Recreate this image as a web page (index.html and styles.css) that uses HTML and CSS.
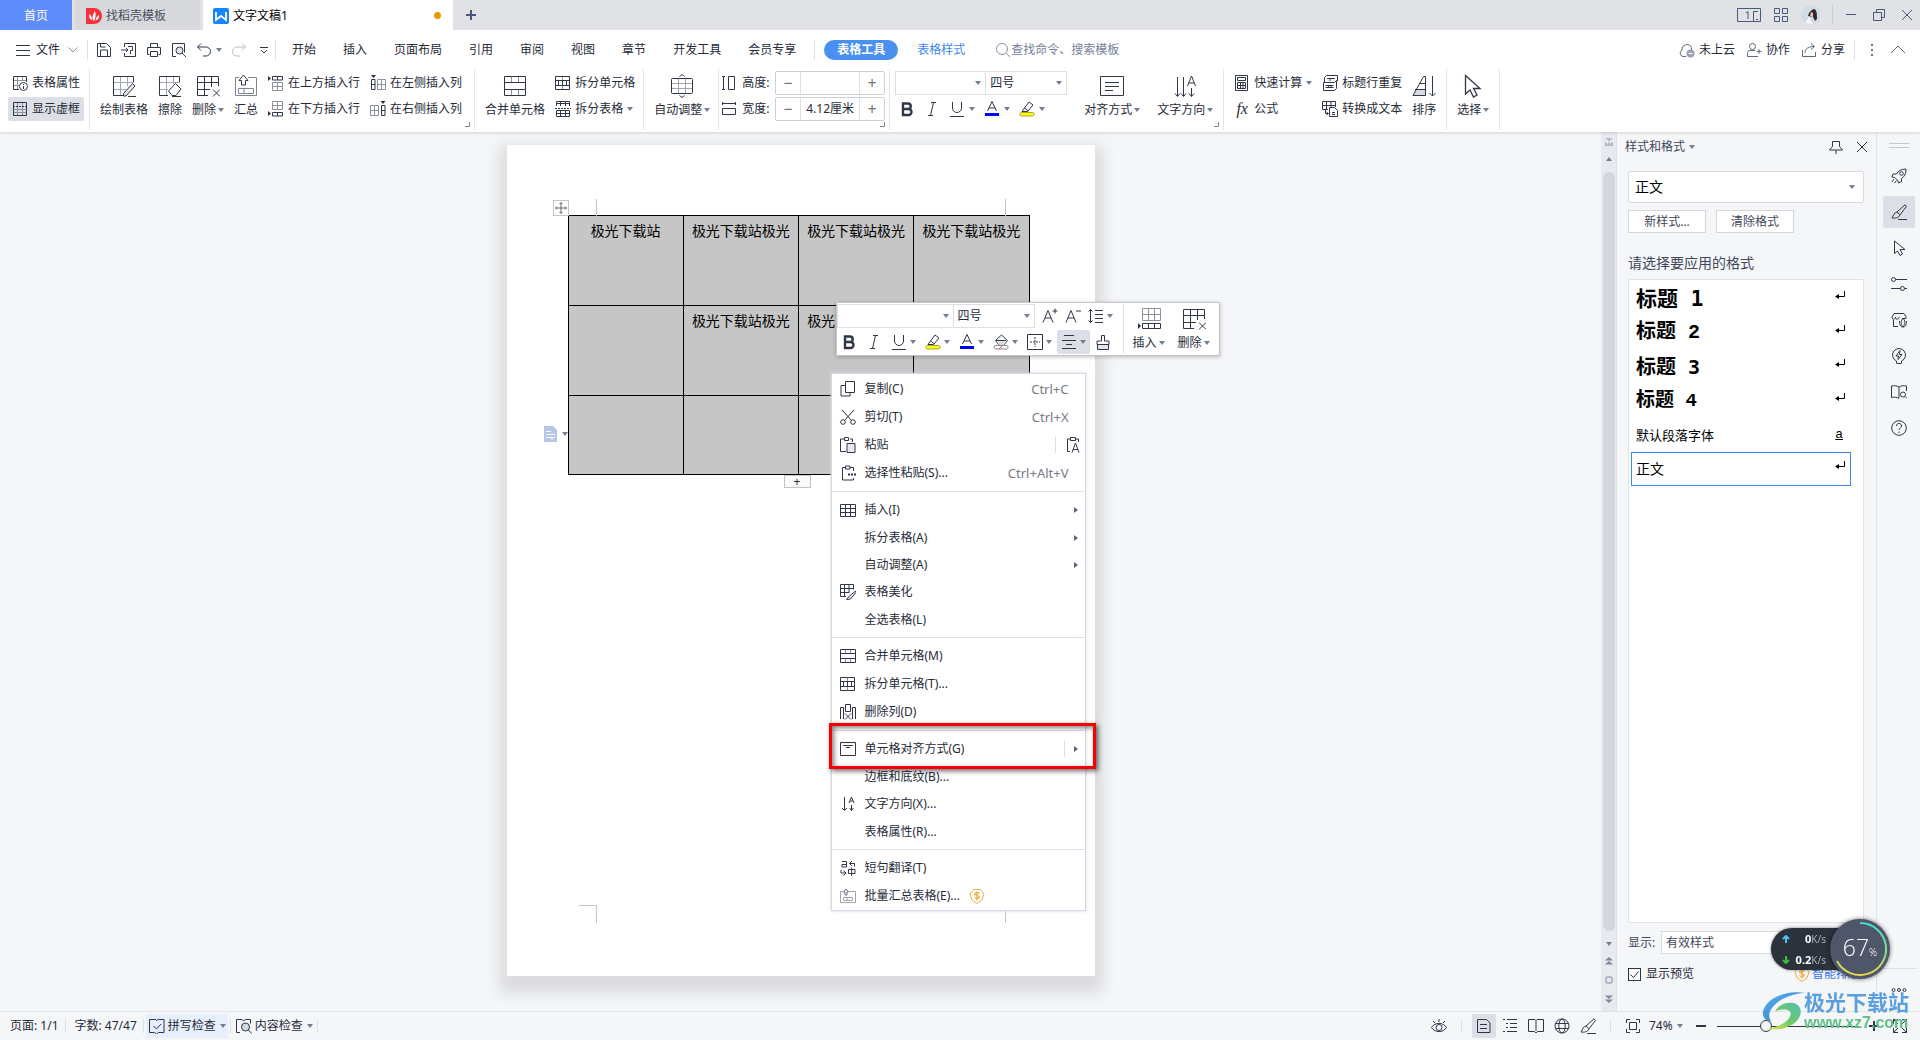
FILE: index.html
```html
<!DOCTYPE html>
<html lang="zh-CN">
<head>
<meta charset="utf-8">
<title>文字文稿1</title>
<link rel="stylesheet" href="styles.css">
</head>
<body>
<svg class="sprite" aria-hidden="true">
  <symbol id="caret" viewBox="0 0 6 4"><path d="M0 0h6L3 4z" fill="#737d93"/></symbol>
  <symbol id="arrow" viewBox="0 0 4 6"><path d="M0 0v6l4-3z" fill="#5a6377"/></symbol>
  <symbol id="corner" viewBox="0 0 5 5"><path d="M4.500 0v4.500H0" stroke="#7d8699"/></symbol>
  <symbol id="save" viewBox="0 0 16 16"><path d="M1.500 1.500h9l4 4v9h-13zM4.500 14v-6h7v6M4.500 2v3h5"/></symbol>
  <symbol id="export" viewBox="0 0 16 16"><path d="M3.500 5V1.500h11v13h-11V11M0 8h7M5 6l2 2-2 2M7 4.500h4.500v4H9.500V12"/></symbol>
  <symbol id="print" viewBox="0 0 16 16"><path d="M4.500 5V1.500h7V5M3.500 12.500h-2v-7h13v7h-2M4.500 9.500h7v5h-7z"/></symbol>
  <symbol id="preview" viewBox="0 0 16 16"><path d="M5 14.500H1.500v-13h12v9"/><circle cx="8.500" cy="8.500" r="3.500" fill="#e2e5ea"/><path d="M11 11l4 4"/></symbol>
  <symbol id="undo" viewBox="0 0 16 16"><path d="M5 1.500L1.500 5 5 8.500M1.500 5H10a4.500 4.500 0 010 9H7"/></symbol>
  <symbol id="redo" viewBox="0 0 16 16"><path d="M11 1.500L14.500 5 11 8.500M14.500 5H6a4.500 4.500 0 000 9h3" stroke="#b8bcc5"/></symbol>
  <symbol id="more" viewBox="0 0 8 8"><path d="M0 1.500h8M1 4l3 3 3-3"/></symbol>
  <symbol id="burger" viewBox="0 0 16 16"><path d="M1 3.500h14M1 8.500h14M1 13.500h14"/></symbol>
  <symbol id="chev" viewBox="0 0 10 6"><path d="M.5.5L5 5 9.500.5" stroke="#8d93a0"/></symbol>
  <symbol id="chevup" viewBox="0 0 16 16"><path d="M1 11l7-7 7 7" stroke="#5f6879"/></symbol>
  <symbol id="search" viewBox="0 0 16 16"><g stroke="#8a93a7"><circle cx="7" cy="7" r="5.500"/><path d="M11 11l4 4"/></g></symbol>
  <symbol id="cloud" viewBox="0 0 16 16"><path d="M7 14.500H4A3.500 3.500 0 013 8a5 5 0 019.500-2.500V8"/><circle cx="11.500" cy="11.500" r="4" fill="#98a3ba" stroke="none"/><path d="M9.500 11.500h4" stroke="#fff"/></symbol>
  <symbol id="person" viewBox="0 0 16 16"><circle cx="6.500" cy="4.500" r="3"/><path d="M12 14.500H1.500v-3a2.500 2.500 0 012.500-3h5M13 7v5M10.500 9.500h5"/></symbol>
  <symbol id="share" viewBox="0 0 16 16"><path d="M1.500 8v6.500h13V10M4 11c0-4 3-6.500 9-6.500M10 1.500l3.500 3-3.500 3"/></symbol>
  <symbol id="dots" viewBox="0 0 4 16"><path d="M1 2h2v2H1zM1 7h2v2H1zM1 12h2v2H1z" fill="#6d7584" stroke="none"/></symbol>
  <symbol id="tabprop" viewBox="0 0 16 16"><path d="M1.500 5.500h13M5.500 1.500v13M1.500 10.500h6M10.500 1.500V6" stroke="#8d929c"/><path d="M7 14.500H1.500v-13h13V7"/><circle cx="11.500" cy="11.500" r="4" fill="#fff"/><path d="M11.500 9v1M11.500 11v3"/></symbol>
  <symbol id="gridlines" viewBox="0 0 16 16"><path d="M5.500 1.500v13M10.500 1.500v13M1.500 8.500h13M1.500 11.500h13" stroke="#8d929c"/><path d="M1.500 1.500h13v13h-13z"/><path d="M1 5.500h14" stroke-dasharray="2 1"/></symbol>
  <symbol id="drawtab" viewBox="0 0 24 24"><path d="M2 8.500h20M2 15.500h12M8.500 2v20M15.500 2v10" stroke="#a3a7af"/><path d="M12 21.500H1.500v-19h20V8"/><path d="M20.500 9.500l2.500 2.500-9 10H11.500v-2.500z" fill="#e2e5ea"/><path d="M16 22.500h8"/></symbol>
  <symbol id="erase" viewBox="0 0 24 24"><path d="M2 8.500h20M2 15.500h8M8.500 2v20M15.500 2v8" stroke="#a3a7af"/><path d="M10 21.500H1.500v-19h20V8"/><path d="M17.500 9.500l5.500 5.500-5 6.500h-4L10.500 17z" fill="#fff"/><path d="M14 22.500h9"/></symbol>
  <symbol id="deltab" viewBox="0 0 24 24"><path d="M12 21.500H1.500v-19h21V12M2 8.500h21M2 15.500h12M8.500 2v20M15.500 2v11M17 15.500l7 7M24 15.500l-7 7"/></symbol>
  <symbol id="summary" viewBox="0 0 24 24"><path d="M5 3.500H1.500v18h21v-18H14M4.500 14.500h15v5h-15zM10 15v4" stroke="#7f8590"/><path d="M9.500 1L5 6.500h2.500V11h4V6.500H14z" fill="#fff"/></symbol>
  <symbol id="rowabove" viewBox="0 0 16 16"><path d="M4.500 7.500h10v8h-10zM9.500 8v7M5 11.500h9" stroke="#8d929c"/><path d="M4.500 1.500h10v3.500h-10zM9.500 1.500V5"/><path d="M0 1l3 2.500L0 6z" fill="#2b3142" stroke="none"/></symbol>
  <symbol id="rowbelow" viewBox="0 0 16 16"><path d="M4.500.5h10v8h-10zM9.500 1v7M5 4.500h9" stroke="#8d929c"/><path d="M4.500 11.500h10v3.500h-10zM9.500 11.500V15"/><path d="M0 10l3 2.500L0 15z" fill="#2b3142" stroke="none"/></symbol>
  <symbol id="colleft" viewBox="0 0 16 16"><path d="M7.500 4.500h8v10h-8zM11.500 5v9M8 9.500h7" stroke="#8d929c"/><path d="M1.500 4.500h3.500v10H1.500zM1.500 9.500H5"/><path d="M1 0h5L3.500 3z" fill="#2b3142" stroke="none"/></symbol>
  <symbol id="colright" viewBox="0 0 16 16"><path d="M.5 4.500h8v10h-8zM4.500 5v9M1 9.500h7" stroke="#8d929c"/><path d="M11.500 4.500h3.500v10h-3.500zM11.500 9.500H15"/><path d="M10.500 0h5L13 3z" fill="#2b3142" stroke="none"/></symbol>
  <symbol id="merge" viewBox="0 0 24 24"><path d="M8.500 2.500V8M15.500 2.500V8M8.500 16v5M15.500 16v5" stroke="#8d929c"/><path d="M1.500 2.500h21v19h-21zM1.500 8.500h21M1.500 15.500h21"/></symbol>
  <symbol id="merge16" viewBox="0 0 16 16"><path d="M5.500 2v4M10.500 2v4M5.500 10v4M10.500 10v4" stroke="#8d929c"/><path d="M.5 1.500h15v13H.5zM.5 5.500h15M.5 10.500h15"/></symbol>
  <symbol id="splitcell" viewBox="0 0 16 16"><path d="M7.500 2v3M7.500 11v3" stroke="#8d929c"/><path d="M.5 1.500h14v13H.5zM.5 5.500h14M.5 10.500h14M3.500 6v4M7.500 6v4M11.500 6v4"/></symbol>
  <symbol id="splittab" viewBox="0 0 16 16"><path d="M1.500 5V.5h13V5M2 2.500h12M5.500 1v4M10.500 1v4M1.500 15.500v-6h13v6zM2 12.500h12M5.500 10v5M10.500 10v5"/><path d="M0 7.500h16" stroke-dasharray="2 1"/></symbol>
  <symbol id="autofit" viewBox="0 0 24 24"><path d="M2 9.500h20M2 14.500h20M8.500 5v14M15.500 5v14" stroke="#a3a7af"/><rect x="1.500" y="4.500" width="21" height="15" rx="1"/><path d="M9.500 2.500L12 .5l2.500 2M9.500 21.500l2.500 2 2.500-2"/></symbol>
  <symbol id="height" viewBox="0 0 16 16"><path d="M2.500 1.500v13M1 1.500h3M1 14.500h3M7.500 1.500h6v13h-6z"/></symbol>
  <symbol id="width" viewBox="0 0 16 16"><path d="M1.500 2.500h13M1.500 1v3M14.500 1v3M1.500 7.500h13v6h-13z"/></symbol>
  <symbol id="bold" viewBox="0 0 16 16"><path d="M4 2.500h5a2.700 2.700 0 010 5.500H4zM4 8h5.500a3 3 0 010 6H4z" stroke-width="2.400"/></symbol>
  <symbol id="italic" viewBox="0 0 16 16"><path d="M7 1.500h5M4 14.500h5M9.500 1.500l-3 13"/></symbol>
  <symbol id="under" viewBox="0 0 16 16"><path d="M3.500 1v6a4.500 4.500 0 009 0V1M1 15.500h14"/></symbol>
  <symbol id="fcolor" viewBox="0 0 16 16"><path d="M3.500 10L8 .5 12.500 10M5 7h6"/><path d="M1 12h14v3H1z" fill="#00f" stroke="none"/></symbol>
  <symbol id="hilite" viewBox="0 0 16 16"><path d="M4 9l6-8 4 3-5.500 6.500H3zM5.500 7l4 3"/><rect x="1" y="11.500" width="14" height="3.500" rx="1.500" fill="#ff0" stroke="#a8a43c"/></symbol>
  <symbol id="bucket" viewBox="0 0 16 16"><path d="M2.500 6.500l6-5.500 6 5.500-3.500 4.500H6z"/><path d="M4 7.500h9.500L11 11H6z" fill="#d5d9e0" stroke="none"/><path d="M3 6.500h10"/><rect x="1" y="11.500" width="14" height="3.500" rx="1.500" stroke="#888"/><path d="M6 15l4-4" stroke="#e05050"/></symbol>
  <symbol id="border" viewBox="0 0 16 16"><path d="M.5.5h15v15H.5z"/><path d="M8 3v10M3 8h10" stroke-dasharray="2 1"/></symbol>
  <symbol id="center" viewBox="0 0 16 16"><path d="M3 1.500h10M1 6.500h14M5 10.500h6M1 14.500h14"/></symbol>
  <symbol id="brush" viewBox="0 0 16 16"><path d="M2.500 10.500v5h11v-5z" fill="#e2e5ea"/><path d="M6.500 7V1.500h3V7h4.500v3.500H2V7z"/></symbol>
  <symbol id="aplus" viewBox="0 0 16 16"><path d="M1 14.500L6 2.500l5 12M3 10h6M13 .5v5M10.500 3h5"/></symbol>
  <symbol id="aminus" viewBox="0 0 16 16"><path d="M1 14.500L6 2.500l5 12M3 10h6M11 3h5"/></symbol>
  <symbol id="spacing" viewBox="0 0 16 16"><path d="M2.500 1v14M.5 3.500l2-2 2 2M.5 12.500l2 2 2-2M7 2.500h8M7 6.500h8M7 10.500h8M7 14.500h8"/></symbol>
  <symbol id="align" viewBox="0 0 24 24"><path d="M.5 2.500h23v19H.5zM5 8.500h14M5 12.500h14M5 16.500h8"/></symbol>
  <symbol id="textdir" viewBox="0 0 24 24"><path d="M4.500 3v19M2 19.500l2.500 3 2.500-3M10.500 3v19M8 19.500l2.500 3 2.500-3M14.500 12L18.500 2l4 10M16 9h5M18.500 14v8M16 19.500l2.500 3 2.500-3"/></symbol>
  <symbol id="textdir16" viewBox="0 0 16 16"><path d="M4.500 1v13M2 12l2.500 2.500L7 12M9 7l2.500-6L14 7M10 5h3M11.500 9v5.500M9.500 12l2 2.500 2-2.500"/></symbol>
  <symbol id="calc" viewBox="0 0 16 16"><path d="M1.500.5h12v15h-12zM3.500 2.500h8v3h-8zM3.500 7.500h8v6h-8zM6.500 7.500v6M9 7.500v6M3.500 10.500h8"/></symbol>
  <symbol id="headrow" viewBox="0 0 16 16"><path d="M2.500 8V2.500l2-2h11V6M1.500 7.500h11l2-2v8l-2 2h-11z"/><path d="M5 3.500h8M3.500 10.500h8M3.500 12.500h8M6.500 10v3M9 10v3M8 3v3"/></symbol>
  <symbol id="totext" viewBox="0 0 16 16"><path d="M6 8.500H.5v-8h13V6M1 4.500h12M4.500 1v8M9 1v5M3.500 9v3.500H6M4.500 11L6.500 12.500l-2 1.500M7.500 6.500h5l3 3v6h-8zM10 11.500h3M10 13.500h3"/></symbol>
  <symbol id="sort" viewBox="0 0 24 24"><path d="M3 16h11v6H1z" fill="#d9dce1" stroke="none"/><path d="M1 21.500L11.500 2.500h2v19zM3 15.500h10.500M7 9.500h6M20.500 2v20M17.500 19l3 3 3-3"/></symbol>
  <symbol id="pointer" viewBox="0 0 24 24"><path d="M4.500 1.500v18.500l4.500-4 3.500 7 3.500-2-3.500-6.500H19z" stroke-width="1.300"/></symbol>
  <symbol id="pointer16" viewBox="0 0 16 16"><path d="M3.500 1v12.500l3-2.500 2.500 4.500 2.500-1.500L9 9.500h5z"/></symbol>
  <symbol id="copy" viewBox="0 0 16 16"><path d="M5 4.500H1V15h9v-3M5.500.5h9v11h-9z"/></symbol>
  <symbol id="cut" viewBox="0 0 16 16"><path d="M2 1l9.500 10.500M14 1L4.500 11.500"/><circle cx="3" cy="13" r="2.300"/><circle cx="13" cy="13" r="2.300"/></symbol>
  <symbol id="paste" viewBox="0 0 16 16"><path d="M4 2H.5v12.500H6M10 2h2.500v3M4.500.5h4v3h-4z"/><path d="M7 6.500h8v9H7z" fill="#e6e8ec"/></symbol>
  <symbol id="pastesp" viewBox="0 0 16 16"><path d="M5 2.500H2.500v12.500h11V13M10 2.500h3.500V6M5.500 1h4.500v3H5.500z"/><path d="M8 9.500h8" stroke-width="2" stroke-dasharray="2 1"/></symbol>
  <symbol id="pastea" viewBox="0 0 16 16"><path d="M5 2H2.500v12.500H5M11 2h2.500v3M5.500.5h5v3h-5zM7 15.500L10.500 6 14 15.500M8 12.500h5"/></symbol>
  <symbol id="grid" viewBox="0 0 16 16"><path d="M.5 2.500h15v12H.5zM.5 6.500h15M.5 10.500h15M5.500 2.500v12M10.500 2.500v12"/></symbol>
  <symbol id="beautify" viewBox="0 0 16 16"><path d="M6 12.500H.5v-12h13v5M1 4.500h12M1 8.500h8M4.500 1v11M9 1v8"/><path d="M15.500 7l-6 5-3 3.500 4-.5 5.500-6.500z" fill="#e2e5ea"/></symbol>
  <symbol id="delcol" viewBox="0 0 16 16"><path d="M.5 15V3.500h3V15M12.500 15V3.500h3V15M5.500.5h5v7h-5zM5 9.500l6 6M11 9.500l-6 6"/></symbol>
  <symbol id="cellalign" viewBox="0 0 16 16"><path d="M.5 1.500h15v13H.5zM3 4.500h10M6 6.500h4"/></symbol>
  <symbol id="translate" viewBox="0 0 16 16"><path d="M2 1.500h4.500V7H2V4.500h4.500M10 3.500h4.500v3M12 1l-2.500 2.500L12 6M1 10v3h4M3.500 10.500L6 13l-2.500 2.500M8.500 9.500h6.500v4H8.500zM11.700 7.500V16"/></symbol>
  <symbol id="summary16" viewBox="0 0 16 16"><path d="M3 3.500H.5v11h15v-11H9M3.500 9.500h9v3h-9zM7 10v2" stroke="#a0a4ac"/><path d="M6 1L3.500 4h1.500v3h2V4h1.500z" stroke="#6b7180"/></symbol>
  <symbol id="coin" viewBox="0 0 16 16"><path d="M4.500 1.500h7L15 6l-2 6-5 3.500L3 12 1 6z" stroke="#f0ad3e"/><path d="M10.500 5.500c-1-1.500-5-1-5 .5s5 1.500 5 3-4 2-5 .5M8 3.500v9" stroke="#f0ad3e" stroke-width="1.300"/></symbol>
  <symbol id="pin" viewBox="0 0 16 16"><path d="M4.500 2.500h7v5l3 3.500h-13l3-3.500zM8 11v4"/></symbol>
  <symbol id="close" viewBox="0 0 12 12"><path d="M1 1l10 10M11 1L1 11"/></symbol>
  <symbol id="ret" viewBox="0 0 10 8"><path d="M9.500 0v5.500H2" stroke="#000"/><path d="M0 5.500l4-2.500v5z" fill="#000" stroke="none"/></symbol>
  <symbol id="rocket" viewBox="0 0 16 16"><path d="M15 1c-5 0-8 2-9.500 5H2L.8 9l3 .5 3 3L7.500 15l3-1.500v-3C13.500 8.500 15 6 15 1zM3 11l-2 3M5.500 12.500l-2 2.500"/><circle cx="10.500" cy="5.500" r="1.800"/></symbol>
  <symbol id="pen" viewBox="0 0 16 16"><path d="M14 .8l1.500 1.500-6.500 8.500L6 8zM6 8c-3 .5-3 3-5 6 3 .5 7 0 8-3.200M7 15.500h9"/></symbol>
  <symbol id="sliders" viewBox="0 0 16 16"><circle cx="2.500" cy="3.500" r="2"/><circle cx="11.500" cy="12.500" r="2"/><path d="M4.500 3.500H16M0 12.500h9.500M13.500 12.500H16"/></symbol>
  <symbol id="shop" viewBox="0 0 16 16"><path d="M3 1.500h10l2 3v2H11M3 1.500l-2 3.500c0 3 3.500 3 3.500 0 0 3 3.500 3 3.500 0M2.500 8v6.500H7"/><path d="M12 6c-2 3-3 5 0 9 3-4 2-6 0-9zM8.500 9c0 4 1 6 3.500 6 2.500 0 3.500-2 3.500-6"/></symbol>
  <symbol id="bulb" viewBox="0 0 16 16"><path d="M5.500 15.500h5M5.500 13v2M10.500 13v2M5.500 13a6.500 6.500 0 115 0M9 2.500L5 8h2.500L7 11.500 11 6.500H8.500z"/></symbol>
  <symbol id="booksearch" viewBox="0 0 16 16"><path d="M8 3v11M8 3C6 1.500 3 1.500.5 2v11.500c2.500-.5 5.500-.5 7.500 1M8 3c2-1.500 5-1.500 7.500-1v5"/><circle cx="12" cy="10.500" r="2.500"/><path d="M14 12.500l2 2"/></symbol>
  <symbol id="help" viewBox="0 0 16 16"><circle cx="8" cy="8" r="7.300"/><path d="M5.500 6c0-3.500 5-3.500 5 0 0 2-2.500 2-2.500 4M8 11.500V13"/></symbol>
  <symbol id="spell" viewBox="0 0 16 16"><path d="M6 1.500H.5v13h5l2 1.500 2-1.500h5.500v-13H9.500M7.500 2.500L6 1M7.500 2.500L9.500 1M4.500 8l3 3L12 6"/></symbol>
  <symbol id="content" viewBox="0 0 16 16"><path d="M4 14.500H.5v-13H6l1.500 1.500 2-1.500h5v4"/><circle cx="9.500" cy="9" r="4" fill="#d5d9e0"/><path d="M12.500 12l3 3.500"/></symbol>
  <symbol id="eye" viewBox="0 0 16 16"><path d="M.5 9.500C4 4 12 4 15.500 9.500 12 15 4 15 .5 9.500zM2 3l2 2M8 1v3M14 3l-2 2"/><circle cx="8" cy="9.500" r="3"/></symbol>
  <symbol id="vpage" viewBox="0 0 16 16"><path d="M1.500 1.500h9l3.500 3.500v9.500H1.500zM4 6.500h7M4 10.500h7"/></symbol>
  <symbol id="voutline" viewBox="0 0 16 16"><path d="M1 1.500h2M5 1.500h10M4 5.500h2M8 5.500h7M4 9.500h2M8 9.500h7M1 13.500h2M5 13.500h10"/></symbol>
  <symbol id="vbook" viewBox="0 0 16 16"><path d="M.5 1.500H7l1 1 1-1h6.500v12H9.500L8 15l-1.500-1.500h-6zM8 2.500V13"/></symbol>
  <symbol id="globe" viewBox="0 0 16 16"><circle cx="8" cy="8" r="7"/><ellipse cx="8" cy="8" rx="3.200" ry="7"/><path d="M1.500 5.500h13M1.500 10.500h13"/></symbol>
  <symbol id="fit" viewBox="0 0 16 16"><path d="M1.500 5V1.500H5M11 1.500h3.500V5M14.500 11v3.500H11M5 14.500H1.500V11M4.500 4.500h7v7h-7z"/></symbol>
  <symbol id="full" viewBox="0 0 16 16"><path d="M1.500 6V1.500H6M10 1.500h4.500V6M14.500 10v4.500H10M6 14.500H1.500V10M1.500 1.500L6 6M14.500 1.500L10 6M14.500 14.500L10 10M1.500 14.500L6 10"/></symbol>
  <symbol id="minus" viewBox="0 0 12 12"><path d="M1 6h10" stroke-width="2"/></symbol>
  <symbol id="plus" viewBox="0 0 12 12"><path d="M1 6h10M6 1v10" stroke-width="2"/></symbol>
  <symbol id="move" viewBox="0 0 12 12"><path d="M6 .5v11M.5 6h11M4.500 2L6 .5 7.500 2M4.500 10L6 11.500 7.500 10M2 4.500L.5 6 2 7.500M10 4.500L11.500 6 10 7.500" stroke="#666"/></symbol>
</svg>

<header class="top">
  <div class="titlebar">
    <button class="tab home">首页</button>
    <button class="tab docer"><svg class="i16" viewBox="0 0 16 16"><path d="M0 0h8a8 8 0 010 16H0z" fill="#f5323c"/><path d="M8 13C5 11 7 6 9 3c1 3 1 7-1 10zM6 12C3 11 3 8 3.500 6 5 7 6 9 6 12zM9.500 12.500c3-1 4-3 3.500-5.500-2 1-3 3-3.500 5.500z" fill="#fff" stroke="none"/></svg>找稻壳模板</button>
    <button class="tab current"><svg class="i16" viewBox="0 0 16 16"><rect width="16" height="16" rx="2" fill="#1685fb" stroke="none"/><path d="M3 4v8l5-4 5 4V4" stroke="#fff" stroke-width="1.800"/></svg>文字文稿1<i class="unsaved"></i></button>
    <button class="plain newtab" aria-label="新建"><svg class="i12"><use href="#plus"/></svg></button>
    <div class="winctl">
      <button class="plain" aria-label="窗口"><svg class="wide" viewBox="0 0 24 16"><path d="M.5 1.500h23v13H.5zM21 4.500h-4.500v10M19 12.500h2M9 6l2-1.500V12"/></svg></button>
      <button class="plain" aria-label="应用"><svg class="i16" viewBox="0 0 16 16"><path d="M1.500 1.500h5v5h-5zM9.500 1.500h5v5h-5zM1.500 9.500h5v5h-5zM9.500 9.500h5v5h-5z"/></svg></button>
      <button class="plain" aria-label="账户"><svg class="i20" viewBox="0 0 20 20"><circle cx="10" cy="10" r="10" fill="#cfdce3" stroke="none"/><path d="M7 11c1-4 3-6 6-7 3 1 3 5 3 10l-2 2-2-4z" fill="#33282b" stroke="none"/><path d="M10 7l2 1v4l-3-1z" fill="#e8c4b8" stroke="none"/><path d="M4 18l4-6 4 7z" fill="#f5f5f7" stroke="none"/></svg></button>
      <i class="vsep"></i>
      <button class="plain" aria-label="最小化"><svg class="i12" viewBox="0 0 12 12"><path d="M1 5.500h10"/></svg></button>
      <button class="plain" aria-label="还原"><svg class="i12" viewBox="0 0 12 12"><path d="M3.500 3V.5h8v8H9M.5 3.500h8v8h-8z"/></svg></button>
      <button class="plain" aria-label="关闭"><svg class="i12"><use href="#close"/></svg></button>
    </div>
  </div>

  <div class="menubar">
    <button class="plain file"><svg class="i16"><use href="#burger"/></svg>文件<svg class="chev"><use href="#chev"/></svg></button>
    <i class="vsep"></i>
    <div class="quick">
      <button class="plain" aria-label="保存"><svg class="i16"><use href="#save"/></svg></button>
      <button class="plain" aria-label="输出"><svg class="i16"><use href="#export"/></svg></button>
      <button class="plain" aria-label="打印"><svg class="i16"><use href="#print"/></svg></button>
      <button class="plain" aria-label="预览"><svg class="i16"><use href="#preview"/></svg></button>
      <button class="plain" aria-label="撤销"><svg class="i16"><use href="#undo"/></svg><svg class="caret"><use href="#caret"/></svg></button>
      <button class="plain" aria-label="恢复"><svg class="i16"><use href="#redo"/></svg></button>
      <button class="plain custom" aria-label="自定义"><svg class="i8"><use href="#more"/></svg></button>
    </div>
    <i class="vsep"></i>
    <nav class="tabs">
      <a href="#">开始</a><a href="#">插入</a><a href="#">页面布局</a><a href="#">引用</a><a href="#">审阅</a><a href="#">视图</a><a href="#">章节</a><a href="#">开发工具</a><a href="#">会员专享</a>
    </nav>
    <i class="vsep"></i>
    <a class="pill" href="#">表格工具</a>
    <a class="styletab" href="#">表格样式</a>
    <label class="find"><svg class="i16"><use href="#search"/></svg><input placeholder="查找命令、搜索模板" aria-label="查找命令、搜索模板"></label>
    <div class="collab">
      <button class="plain"><svg class="i16"><use href="#cloud"/></svg>未上云</button>
      <button class="plain"><svg class="i16"><use href="#person"/></svg>协作</button>
      <button class="plain"><svg class="i16"><use href="#share"/></svg>分享</button>
    </div>
    <i class="vsep"></i>
    <div class="fold">
      <button class="plain" aria-label="更多"><svg class="dots"><use href="#dots"/></svg></button>
      <button class="plain" aria-label="收起"><svg class="i16"><use href="#chevup"/></svg></button>
    </div>
  </div>

  <div class="ribbon">
    <div class="group first">
      <div class="stack">
        <button class="small"><svg class="i16"><use href="#tabprop"/></svg>表格属性</button>
        <button class="small on"><svg class="i16"><use href="#gridlines"/></svg>显示虚框</button>
      </div>
    </div>
    <div class="group insert">
      <button class="big"><svg class="i24"><use href="#drawtab"/></svg><span>绘制表格</span></button>
      <button class="big"><svg class="i24"><use href="#erase"/></svg><span>擦除</span></button>
      <button class="big"><svg class="i24"><use href="#deltab"/></svg><span>删除<svg class="caret"><use href="#caret"/></svg></span></button>
      <button class="big"><svg class="i24"><use href="#summary"/></svg><span>汇总</span></button>
      <div class="stack">
        <button class="small flush"><svg class="i16"><use href="#rowabove"/></svg>在上方插入行</button>
        <button class="small flush"><svg class="i16"><use href="#rowbelow"/></svg>在下方插入行</button>
      </div>
      <div class="stack">
        <button class="small flush"><svg class="i16"><use href="#colleft"/></svg>在左侧插入列</button>
        <button class="small flush"><svg class="i16"><use href="#colright"/></svg>在右侧插入列</button>
      </div>
      <svg class="corner"><use href="#corner"/></svg>
    </div>
    <div class="group tight">
      <button class="big"><svg class="i24"><use href="#merge"/></svg><span>合并单元格</span></button>
      <div class="stack">
        <button class="small flush"><svg class="i16"><use href="#splitcell"/></svg>拆分单元格</button>
        <button class="small flush"><svg class="i16"><use href="#splittab"/></svg>拆分表格<svg class="caret"><use href="#caret"/></svg></button>
      </div>
    </div>
    <div class="group tight">
      <button class="big"><svg class="i24"><use href="#autofit"/></svg><span>自动调整<svg class="caret"><use href="#caret"/></svg></span></button>
    </div>
    <div class="group size">
      <div class="stack">
        <div class="dim"><svg class="i16"><use href="#height"/></svg><label for="rowh">高度:</label><div class="spin"><button aria-label="减小">−</button><input id="rowh"><button aria-label="增大">+</button></div></div>
        <div class="dim"><svg class="i16"><use href="#width"/></svg><label for="colw">宽度:</label><div class="spin"><button aria-label="减小">−</button><input id="colw" value="4.12厘米"><button aria-label="增大">+</button></div></div>
      </div>
      <svg class="corner"><use href="#corner"/></svg>
    </div>
    <div class="group font">
      <div class="stack">
        <div class="combo"><select class="fname" aria-label="字体"><option></option></select><select class="fsize" aria-label="字号"><option>四号</option></select></div>
        <div class="fmt">
          <button class="plain" aria-label="加粗"><svg class="i16"><use href="#bold"/></svg></button>
          <button class="plain" aria-label="倾斜"><svg class="i16"><use href="#italic"/></svg></button>
          <button class="plain" aria-label="下划线"><svg class="i16"><use href="#under"/></svg><svg class="caret"><use href="#caret"/></svg></button>
          <button class="plain" aria-label="字体颜色"><svg class="i16"><use href="#fcolor"/></svg><svg class="caret"><use href="#caret"/></svg></button>
          <button class="plain" aria-label="突出显示"><svg class="i16"><use href="#hilite"/></svg><svg class="caret"><use href="#caret"/></svg></button>
        </div>
      </div>
      <button class="big"><svg class="i24"><use href="#align"/></svg><span>对齐方式<svg class="caret"><use href="#caret"/></svg></span></button>
      <button class="big"><svg class="i24"><use href="#textdir"/></svg><span>文字方向<svg class="caret"><use href="#caret"/></svg></span></button>
      <svg class="corner"><use href="#corner"/></svg>
    </div>
    <div class="group">
      <div class="stack">
        <button class="small flush"><svg class="i16"><use href="#calc"/></svg>快速计算<svg class="caret"><use href="#caret"/></svg></button>
        <button class="small flush"><i class="fx">fx</i>公式</button>
      </div>
      <div class="stack">
        <button class="small flush"><svg class="i16"><use href="#headrow"/></svg>标题行重复</button>
        <button class="small flush"><svg class="i16"><use href="#totext"/></svg>转换成文本</button>
      </div>
      <button class="big"><svg class="i24"><use href="#sort"/></svg><span>排序</span></button>
    </div>
    <div class="group">
      <button class="big"><svg class="i24"><use href="#pointer"/></svg><span>选择<svg class="caret"><use href="#caret"/></svg></span></button>
    </div>
  </div>
</header>

<main class="work">
  <section class="canvas">
    <article class="page">
      <i class="mark tl"></i><i class="mark tr"></i><i class="mark bl"></i><i class="mark br"></i>
      <span class="handle"><svg class="i12"><use href="#move"/></svg></span>
      <table class="doc">
        <tr class="tall"><td>极光下载站</td><td>极光下载站极光</td><td>极光下载站极光</td><td>极光下载站极光</td></tr>
        <tr class="tall"><td></td><td>极光下载站极光</td><td>极光下载站极光</td><td></td></tr>
        <tr><td></td><td></td><td></td><td></td></tr>
      </table>
      <span class="addrow">+</span>
      <span class="para"><svg class="i16" viewBox="0 0 16 16"><path d="M1 0h9l4 4v12H1z" fill="#b4c7e7" stroke="none"/><path d="M3 5.500h5M3 8.500h9M3 11.500h9M9 11v3" stroke="#fff"/></svg><svg class="caret"><use href="#caret"/></svg></span>

      <div class="minibar">
        <div class="minileft">
          <div class="minirow">
            <div class="combo"><select class="fname" aria-label="字体"><option></option></select><select class="fsize" aria-label="字号"><option>四号</option></select></div>
            <button class="plain" aria-label="增大字号"><svg class="i16"><use href="#aplus"/></svg></button>
            <button class="plain" aria-label="减小字号"><svg class="i16"><use href="#aminus"/></svg></button>
            <button class="plain" aria-label="行距"><svg class="i16"><use href="#spacing"/></svg><svg class="caret"><use href="#caret"/></svg></button>
          </div>
          <div class="minirow fmts">
            <button class="plain" aria-label="加粗"><svg class="i16"><use href="#bold"/></svg></button>
            <button class="plain" aria-label="倾斜"><svg class="i16"><use href="#italic"/></svg></button>
            <button class="plain" aria-label="下划线"><svg class="i16"><use href="#under"/></svg><svg class="caret"><use href="#caret"/></svg></button>
            <button class="plain" aria-label="突出显示"><svg class="i16"><use href="#hilite"/></svg><svg class="caret"><use href="#caret"/></svg></button>
            <button class="plain" aria-label="字体颜色"><svg class="i16"><use href="#fcolor"/></svg><svg class="caret"><use href="#caret"/></svg></button>
            <button class="plain" aria-label="底纹"><svg class="i16"><use href="#bucket"/></svg><svg class="caret"><use href="#caret"/></svg></button>
            <button class="plain" aria-label="边框"><svg class="i16"><use href="#border"/></svg><svg class="caret"><use href="#caret"/></svg></button>
            <button class="plain on" aria-label="居中"><svg class="i16"><use href="#center"/></svg><svg class="caret"><use href="#caret"/></svg></button>
            <button class="plain" aria-label="格式刷"><svg class="i16"><use href="#brush"/></svg></button>
          </div>
        </div>
        <div class="miniright">
          <button class="big"><svg class="i24" viewBox="0 0 24 24"><path d="M5.500 1.500h18v12h-18zM11.500 2v11M17.500 2v11M6 7.500h17" stroke="#8d929c"/><path d="M5.500 16.500h18v5h-18zM11.500 17v4M17.500 17v4"/><path d="M1 16l3 3-3 3z" fill="#2b3142" stroke="none"/></svg><span>插入<svg class="caret"><use href="#caret"/></svg></span></button>
          <button class="big"><svg class="i24"><use href="#deltab"/></svg><span>删除<svg class="caret"><use href="#caret"/></svg></span></button>
        </div>
      </div>

      <div class="context">
        <button class="item"><svg class="i16"><use href="#copy"/></svg><span>复制(C)</span><kbd>Ctrl+C</kbd></button>
        <button class="item"><svg class="i16"><use href="#cut"/></svg><span>剪切(T)</span><kbd>Ctrl+X</kbd></button>
        <button class="item"><svg class="i16"><use href="#paste"/></svg><span>粘贴</span><i class="vbar"></i><svg class="i16 side"><use href="#pastea"/></svg></button>
        <button class="item"><svg class="i16"><use href="#pastesp"/></svg><span>选择性粘贴(S)...</span><kbd>Ctrl+Alt+V</kbd></button>
        <hr>
        <button class="item"><svg class="i16"><use href="#grid"/></svg><span>插入(I)</span><svg class="arrow"><use href="#arrow"/></svg></button>
        <button class="item bare"><span>拆分表格(A)</span><svg class="arrow"><use href="#arrow"/></svg></button>
        <button class="item bare"><span>自动调整(A)</span><svg class="arrow"><use href="#arrow"/></svg></button>
        <button class="item"><svg class="i16"><use href="#beautify"/></svg><span>表格美化</span></button>
        <button class="item bare"><span>全选表格(L)</span></button>
        <hr>
        <button class="item"><svg class="i16"><use href="#merge16"/></svg><span>合并单元格(M)</span></button>
        <button class="item"><svg class="i16"><use href="#splitcell"/></svg><span>拆分单元格(T)...</span></button>
        <button class="item"><svg class="i16"><use href="#delcol"/></svg><span>删除列(D)</span></button>
        <hr>
        <button class="item marked"><svg class="i16"><use href="#cellalign"/></svg><span>单元格对齐方式(G)</span><i class="vbar"></i><svg class="arrow"><use href="#arrow"/></svg></button>
        <button class="item bare"><span>边框和底纹(B)...</span></button>
        <button class="item"><svg class="i16"><use href="#textdir16"/></svg><span>文字方向(X)...</span></button>
        <button class="item bare"><span>表格属性(R)...</span></button>
        <hr>
        <button class="item"><svg class="i16"><use href="#translate"/></svg><span>短句翻译(T)</span></button>
        <button class="item"><svg class="i16"><use href="#summary16"/></svg><span class="fit">批量汇总表格(E)...</span><svg class="i16"><use href="#coin"/></svg></button>
      </div>
    </article>
  </section>

  <div class="vscroll">
    <svg class="i8" viewBox="0 0 8 8"><path d="M1 0h6v1.500H5V3H3V1.500H1zM0 4.500h2v2h1v-2h2v2h1v-2h2V8H0z" fill="#aeb5c6" stroke="none"/></svg>
    <svg class="caret up"><use href="#caret"/></svg>
    <div class="thumb"></div>
    <svg class="caret"><use href="#caret"/></svg>
    <svg class="i8" viewBox="0 0 8 8"><path d="M4 0l4 3.500H0zM4 4l4 3.500H0z" fill="#7f89a0" stroke="none"/></svg>
    <svg class="i8" viewBox="0 0 8 8"><rect x="1" y="1" width="6" height="6" rx="1" stroke="#7f89a0"/></svg>
    <svg class="i8" viewBox="0 0 8 8"><path d="M4 4L0 .5h8zM4 8L0 4.500h8z" fill="#7f89a0" stroke="none"/></svg>
  </div>

  <aside class="pane">
    <div class="panehead"><button class="plain">样式和格式<svg class="caret"><use href="#caret"/></svg></button><span class="grow"></span><button class="plain" aria-label="固定"><svg class="i16"><use href="#pin"/></svg></button><button class="plain" aria-label="关闭"><svg class="i12"><use href="#close"/></svg></button></div>
    <select class="cur" aria-label="当前样式"><option>正文</option></select>
    <div class="pbtns"><button>新样式...</button><button>清除格式</button></div>
    <h2>请选择要应用的格式</h2>
    <ul class="styles">
      <li class="h1">标题 1<svg><use href="#ret"/></svg></li>
      <li class="hb">标题 2<svg><use href="#ret"/></svg></li>
      <li class="h3">标题 3<svg><use href="#ret"/></svg></li>
      <li class="hb h4">标题 4<svg><use href="#ret"/></svg></li>
      <li class="def">默认段落字体<u>a</u></li>
      <li class="sel">正文<svg><use href="#ret"/></svg></li>
    </ul>
    <div class="show"><label for="show">显示:</label><select id="show"><option>有效样式</option></select></div>
    <div class="prev"><input type="checkbox" id="pv" checked><label for="pv">显示预览</label><span class="grow"></span><a href="#"><svg class="i16"><use href="#coin"/></svg>智能排版</a></div>
  </aside>

  <nav class="rail">
    <i class="grip"></i>
    <button class="plain" aria-label="快捷"><svg class="i16"><use href="#rocket"/></svg></button>
    <button class="plain on" aria-label="样式"><svg class="i16"><use href="#pen"/></svg></button>
    <button class="plain" aria-label="选择"><svg class="i16"><use href="#pointer16"/></svg></button>
    <button class="plain" aria-label="属性"><svg class="i16"><use href="#sliders"/></svg></button>
    <button class="plain" aria-label="稻壳"><svg class="i16"><use href="#shop"/></svg></button>
    <button class="plain" aria-label="推荐"><svg class="i16"><use href="#bulb"/></svg></button>
    <button class="plain" aria-label="查找"><svg class="i16"><use href="#booksearch"/></svg></button>
    <button class="plain" aria-label="帮助"><svg class="i16"><use href="#help"/></svg></button>
    <span class="grow"></span>
    <div class="railend"><svg class="i16" viewBox="0 0 16 16"><circle cx="2.500" cy="8" r="1.500"/><circle cx="8" cy="8" r="1.500"/><circle cx="13.500" cy="8" r="1.500"/></svg></div>
  </nav>
</main>

<footer class="status">
  <span class="cell">页面: 1/1</span><i class="vsep"></i>
  <span class="cell">字数: 47/47</span><i class="vsep"></i>
  <button class="check hot"><svg class="i16"><use href="#spell"/></svg>拼写检查<svg class="caret"><use href="#caret"/></svg></button><i class="vsep"></i>
  <button class="check"><svg class="i16"><use href="#content"/></svg>内容检查<svg class="caret"><use href="#caret"/></svg></button><i class="vsep"></i>
  <span class="grow"></span>
  <button class="sq" aria-label="护眼"><svg class="i16"><use href="#eye"/></svg></button><i class="vsep far"></i>
  <button class="sq on" aria-label="页面视图"><svg class="i16"><use href="#vpage"/></svg></button>
  <button class="sq" aria-label="大纲"><svg class="i16"><use href="#voutline"/></svg></button>
  <button class="sq" aria-label="阅读"><svg class="i16"><use href="#vbook"/></svg></button>
  <button class="sq" aria-label="Web"><svg class="i16"><use href="#globe"/></svg></button>
  <button class="sq" aria-label="写作"><svg class="i16"><use href="#pen"/></svg></button><i class="vsep far"></i>
  <button class="sq" aria-label="适合"><svg class="i16"><use href="#fit"/></svg></button>
  <select class="zoom" aria-label="缩放"><option>74%</option></select>
  <button class="sq" aria-label="缩小"><svg class="i12"><use href="#minus"/></svg></button>
  <input type="range" min="0" max="100" value="33" aria-label="显示比例">
  <button class="sq" aria-label="放大"><svg class="i12"><use href="#plus"/></svg></button>
  <button class="sq" aria-label="全屏"><svg class="i16"><use href="#full"/></svg></button>
</footer>

<div class="net">
  <div class="rates">
    <div><svg class="i8" viewBox="0 0 8 8"><path d="M4 8V1M1 4l3-3 3 3" stroke="#4fc3f7" stroke-width="2"/></svg><b>0<small>K/s</small></b></div>
    <div><svg class="i8" viewBox="0 0 8 8"><path d="M4 0v7M1 4l3 3 3-3" stroke="#3fbf3f" stroke-width="2"/></svg><b>0.2<small>K/s</small></b></div>
  </div>
  <div class="ball"><svg viewBox="0 0 60 60"><defs><linearGradient id="ring" x1="0" y1="0" x2="0" y2="1"><stop offset="0" stop-color="#3fe0d8"/><stop offset=".6" stop-color="#8fdc7a"/><stop offset="1" stop-color="#e8d84a"/></linearGradient></defs><path d="M30 4a26 26 0 11-23 38" stroke="url(#ring)" stroke-width="2"/></svg><span>67<small>%</small></span></div>
</div>
<div class="brand">
  <svg viewBox="0 0 46 42"><defs><linearGradient id="sw" x1="0" y1="0" x2="1" y2="1"><stop offset="0" stop-color="#4fb4ea"/><stop offset=".5" stop-color="#4a92dc"/><stop offset="1" stop-color="#5cc46a"/></linearGradient><linearGradient id="sg" x1="0" y1="1" x2="1" y2="0"><stop offset="0" stop-color="#e6e34a"/><stop offset=".5" stop-color="#6cc96a"/><stop offset="1" stop-color="#56bdb4"/></linearGradient></defs><path d="M45 2C24-1 4 8 1 22c-1 6 4 10 9 10C5 26 8 19 15 13 22 7 33 3 45 2z" fill="url(#sw)" stroke="none"/><path d="M14 21c3-6 12-10 20-8 10 4 8 16-2 22-8 5-18 6-26 5 10-2 22-7 24-15 1-6-8-7-16-4z" fill="url(#sg)" stroke="none"/></svg>
  <div><strong>极光下载站</strong><em>www.xz7.com</em></div>
</div>
</body>
</html>
```

FILE: styles.css
```css
*, *::before, *::after { box-sizing: border-box; }
body {
  margin: 0;
  height: 100vh;
  display: flex;
  flex-direction: column;
  overflow: hidden;
  background: #f5f6f8;
  color: #262b38;
  font: 12px/18px "Noto Sans", "Noto Sans CJK SC", sans-serif;
}
button, select, input { font: inherit; color: inherit; margin: 0; }
button { border: 0; padding: 0; background: none; white-space: nowrap; }
a { color: inherit; text-decoration: none; }
svg { fill: none; stroke: #2f3647; flex: none; display: block; }
#caret, #arrow { stroke: none; }
.sprite { position: absolute; width: 0; height: 0; }
.i8 { width: 8px; height: 8px; }
.i12 { width: 12px; height: 12px; }
.i16 { width: 16px; height: 16px; }
.i20 { width: 20px; height: 20px; }
.i24 { width: 24px; height: 24px; }
.wide { width: 24px; height: 16px; }
.caret { width: 6px; height: 4px; }
.arrow { width: 4px; height: 6px; }
.chev { width: 10px; height: 6px; }
.dots { width: 4px; height: 16px; }
.grow { flex: 1; }
.plain { display: flex; align-items: center; gap: 4px; }
.vsep { width: 1px; height: 20px; background: #dcdfe4; flex: none; }

select {
  appearance: none;
  border: 0;
  border-radius: 0;
  padding: 0 16px 0 4px;
  background: #fff url("data:image/svg+xml,%3Csvg xmlns='http://www.w3.org/2000/svg' width='6' height='4'%3E%3Cpath d='M0 0h6L3 4z' fill='%23737d93'/%3E%3C/svg%3E") no-repeat right 4px center;
}

/* title bar */
.top { flex: none; position: relative; background: #fff; box-shadow: 0 1px 3px rgba(0, 0, 0, .15); }
.titlebar { display: flex; align-items: stretch; height: 30px; background: #e1e2e6; gap: 3px; }
.tab { display: flex; align-items: center; gap: 4px; padding-top: 1px; text-align: left; }
.home { width: 72px; justify-content: center; background: #5e8cfb; color: #fff; }
.docer { width: 125px; padding-left: 11px; background: #d8d9dc; color: #4a505e; }
.docer svg { stroke: none; }
.current { width: 250px; padding: 1px 12px 0 10px; background: #fff; color: #000; }
.unsaved { width: 7px; height: 7px; border-radius: 50%; background: #e59a00; margin-left: auto; }
.newtab { padding-left: 9px; }
.titlebar .plain svg { stroke: #4a587c; }
.winctl { margin-left: auto; display: flex; align-items: center; gap: 12px; padding-right: 7px; }
.winctl .vsep + .plain ~ .plain { margin-left: 4px; }
.winctl .vsep { background: #c9ccd2; margin-left: -1px; }

/* menu bar */
.menubar { display: flex; align-items: center; height: 39px; }
.file { padding: 0 9px 0 15px; gap: 5px; }
.file .chev { margin-left: 3px; }
.quick { display: flex; gap: 9px; padding: 0 7px 0 8px; }
.quick .custom { padding-left: 4px; }
.tabs { display: flex; gap: 27px; padding: 0 18px 0 16px; }
.pill { margin-left: 9px; height: 20px; line-height: 20px; padding: 0 13px; border-radius: 10px; background: #4a90f0; color: #fff; font-weight: 700; }
.styletab { margin-left: 19px; color: #3c88f0; }
.find { display: flex; align-items: center; margin-left: 30px; flex: 1; }
.find input { border: 0; padding: 0; width: 120px; background: none; outline: 0; }
.find input::placeholder { color: #76809a; }
.collab { display: flex; gap: 11px; padding-right: 9px; }
.collab svg { stroke: #5f6879; }
.fold { display: flex; align-items: center; gap: 16px; padding: 0 14px 0 15px; }

/* ribbon */
.ribbon { display: flex; height: 63px; }
.group { position: relative; display: flex; gap: 10px; padding: 2px 10px 0; height: 61px; border-right: 1px solid #e3e5e9; }
.group.first { padding: 2px 5px 0 8px; }
.group.insert { padding-right: 12px; }
.group.tight { padding-right: 8px; }
.group.size { padding: 2px 4px 0 2px; }
.group.font { padding-left: 5px; gap: 17px; }
.stack { display: flex; flex-direction: column; gap: 2px; }
.small { display: flex; align-items: center; gap: 4px; height: 24px; padding: 0 4px; }
.small.flush { padding: 0; }
.on { background: #dce0e6; border-radius: 2px; }
.big { display: flex; flex-direction: column; align-items: center; justify-content: flex-start; gap: 3px; padding-top: 3px; }
.big span { display: flex; align-items: center; gap: 2px; }
.corner { position: absolute; right: 4px; bottom: 3px; width: 5px; height: 5px; }
.fx { width: 16px; font: italic 16px/18px "Liberation Serif", serif; }
.dim { display: flex; align-items: center; height: 24px; }
.dim label { width: 38px; padding-left: 5px; }
.spin { display: flex; width: 110px; height: 24px; border: 1px solid #ccd0d7; border-radius: 2px; }
.spin button { width: 24px; font-size: 16px; color: #6d7380; }
.spin input { flex: 1; min-width: 0; border: solid #dcdfe4; border-width: 0 1px; padding: 0; text-align: center; }
.combo { display: flex; height: 24px; border: 1px solid #dcdfe4; }
.combo .fname { width: 90px; border-right: 1px solid #dcdfe4; }
.combo .fsize { width: 80px; }
.fmt { display: flex; gap: 9px; height: 24px; padding-left: 4px; }

/* document */
.work { flex: 1; display: flex; min-height: 0; }
.canvas { flex: 1; display: flex; justify-content: center; align-items: flex-start; padding-top: 13px; min-width: 0; }
.page { position: relative; width: 588px; min-height: 831px; padding: 70px 65px 0 61px; background: #fff; box-shadow: 0 9px 14px 8px rgba(0, 0, 0, .11); }
.doc { width: 462px; border-collapse: collapse; table-layout: fixed; background: #c6c6c6; color: #000; font-size: 14px; }
.doc td { border: 1px solid #000; height: 79px; padding: 6px 0 0; vertical-align: top; text-align: center; white-space: nowrap; }
.doc .tall td { height: 90px; }
.mark { position: absolute; width: 18px; height: 18px; border: 0 solid #c4c4c4; }
.tl { left: 72px; top: 54px; border-width: 0 1px 1px 0; }
.tr { left: 498px; top: 54px; border-width: 0 0 1px 1px; }
.bl { left: 72px; top: 760px; border-width: 1px 1px 0 0; }
.br { left: 498px; top: 760px; border-width: 1px 0 0 1px; }
.handle { position: absolute; left: 46px; top: 55px; width: 16px; height: 16px; padding: 1px; border: 1px solid #c4c4c4; background: #fff; }
.addrow { position: absolute; left: 277px; top: 330px; width: 27px; height: 13px; line-height: 11px; text-align: center; border: 1px solid #c4c4c4; background: #fafafa; }
.para { position: absolute; left: 36px; top: 281px; display: flex; align-items: center; gap: 3px; }

/* floating format bar */
.minibar { position: absolute; left: 329px; top: 157px; width: 384px; height: 54px; display: flex; background: #fff; border: 1px solid #c3c6cb; box-shadow: 0 1px 4px rgba(0, 0, 0, .25); }
.minileft { width: 287px; border-right: 1px solid #dcdfe4; margin: 1px 0; }
.minirow { display: flex; align-items: center; gap: 7px; height: 24px; }
.minirow .combo .fname { width: 116px; }
.minirow .plain { gap: 3px; }
.minirow.fmts { height: 28px; padding-left: 4px; gap: 9px; }
.minirow .on { height: 24px; padding: 0 4px; margin: 0 -4px; }
.miniright { display: flex; gap: 13px; padding-left: 9px; }
.miniright .big { padding-top: 4px; }

/* context menu */
.context { position: absolute; left: 324px; top: 228px; width: 255px; padding-top: 1px; display: flex; flex-direction: column; background: #fff; border: 1px solid #d3dae6; box-shadow: 0 0 3px #cfd8e8; }
.item { display: flex; align-items: center; height: 28px; padding: 0 7px 0 8px; gap: 9px; text-align: left; }
.item span { flex: 1; }
.item span.fit { flex: none; }
.item.bare { height: 27px; padding-left: 33px; }
.item kbd { font: inherit; font-size: 13px; color: #767b86; padding-right: 9px; }
.item .vbar { width: 1px; height: 16px; background: #dcdfe4; }
.context hr { width: 100%; height: 1px; margin: 4px 0; border: 0; background: #dfe3e9; }
.marked { position: relative; }
.marked::after { content: ""; position: absolute; left: -3px; top: -12px; right: -11px; height: 46px; border: 3px solid #f80000; box-shadow: 2px 2px 5px rgba(0, 0, 0, .6), inset 2px 2px 5px rgba(0, 0, 0, .5); }
.item .side { margin-right: -3px; }

/* vertical scroll bar */
.vscroll { width: 15px; display: flex; flex-direction: column; align-items: center; gap: 11px; padding: 6px 0 8px; background: #e8eaef; }
.vscroll .up { transform: rotate(180deg); }
.thumb { flex: 1; width: 12px; border-radius: 6px; background: #d3d6df; }

/* styles pane */
.pane { width: 261px; display: flex; flex-direction: column; border: solid #dfe2e7; border-width: 0 1px; padding: 0 12px 28px 11px; color: #3f475a; }
.panehead { display: flex; align-items: center; gap: 12px; height: 30px; margin: 0 -4px 0 -3px; }
.cur { flex: none; height: 32px; margin-top: 9px; border: 1px solid #d8dbe1; border-radius: 2px; padding-left: 6px; font-size: 14px; color: #000; background-position: right 8px center; }
.pbtns { display: flex; gap: 10px; margin-top: 7px; }
.pbtns button { width: 78px; height: 23px; border: 1px solid #d3d6dc; background: #fff; }
.pane h2 { margin: 20px 0 6px; font: inherit; font-size: 14px; line-height: 20px; }
.styles { flex: 1; margin: 0; padding: 2px; list-style: none; background: #fff; border: 1px solid #dfe2e7; border-radius: 2px; color: #000; }
.styles li { display: flex; align-items: center; justify-content: space-between; height: 34px; margin-right: 10px; padding: 0 5px 0 4px; border: 1px solid transparent; white-space: pre; line-height: 30px; }
.styles svg { width: 10px; height: 8px; margin-bottom: 8px; }
.styles u { font-family: "Liberation Mono", monospace; margin-right: 2px; }
.styles .h1 { font: 700 21px/30px "DejaVu Sans Mono", "Noto Sans CJK SC", monospace; }
.styles .h3 { font: 700 20px/30px "DejaVu Sans Mono", "Noto Sans CJK SC", monospace; }
.styles .hb { font: 700 20px/34px "Liberation Mono", "Noto Sans CJK SC", monospace; }
.styles .hb.h4 { font-size: 19px; }
.styles .def { font-size: 13px; }
.styles .sel { font-size: 14px; border-color: #3f87e8; }
.show { display: flex; align-items: center; margin-top: 8px; }
.show label { width: 33px; }
.show select { flex: 1; height: 23px; border: 1px solid #d8dbe1; }
.prev { display: flex; align-items: center; height: 18px; margin-top: 11px; color: #262b38; }
.prev input { appearance: none; width: 13px; height: 13px; margin-right: 5px; border: 1px solid #2f3647; background: #fff url("data:image/svg+xml,%3Csvg xmlns='http://www.w3.org/2000/svg' width='11' height='11'%3E%3Cpath d='M1.500 5.500l3 3 5-6' fill='none' stroke='%232f3647'/%3E%3C/svg%3E") center no-repeat; }
.prev a { display: flex; align-items: center; gap: 2px; padding-right: 4px; color: #2f74f0; }

/* side rail */
.rail { width: 43px; display: flex; flex-direction: column; align-items: center; gap: 4px; }
.grip { width: 20px; height: 5px; margin: 11px 0 8px; border: solid #c5c9d1; border-width: 1px 0; }
.rail .plain { width: 32px; height: 32px; justify-content: center; }
.railend { width: 37px; height: 43px; border-top: 1px solid #dcdfe4; display: flex; align-items: center; justify-content: center; }

/* status bar */
.status { flex: none; display: flex; align-items: center; gap: 2px; height: 29px; padding: 0 8px 0 6px; border-top: 1px solid #dfe2e7; }
.status .vsep { height: 14px; }
.status .vsep.far { margin: 0 8px; }
.cell { padding: 0 4px; }
.vsep + .cell { padding-left: 7px; }
.check { display: flex; align-items: center; gap: 3px; height: 24px; padding: 0 2px 0 3px; }
.check .caret { margin-left: 1px; }
.hot { background: #e6effb; }
.sq { width: 24px; height: 24px; display: flex; align-items: center; justify-content: center; }
.zoom { width: 40px; height: 22px; padding: 0 10px 0 2px; background-color: transparent; }
.status input { appearance: none; width: 141px; height: 12px; margin: 0 2px; background: linear-gradient(#2f3647, #2f3647) center / 100% 1px no-repeat; }
.status input::-webkit-slider-thumb { appearance: none; width: 12px; height: 12px; border: 1px solid #2f3647; border-radius: 50%; background: #f5f6f8; }

/* network monitor */
.net { position: fixed; right: 30px; bottom: 61px; display: flex; align-items: center; height: 60px; color: #fff; }
.rates { width: 80px; height: 42px; margin-right: -21px; padding: 0 25px 0 11px; border-radius: 21px 0 0 21px; background: #2c323c; box-shadow: 0 0 3px rgba(0, 0, 0, .5); }
.rates div { display: flex; align-items: center; justify-content: space-between; height: 21px; }
.rates b { font: 700 11px/20px "Noto Sans", sans-serif; }
.rates small { font-size: 10px; font-weight: 400; color: #a9aeb8; }
.ball { position: relative; width: 60px; height: 60px; border-radius: 50%; background: #50566a; box-shadow: 0 0 4px rgba(0, 0, 0, .6); display: flex; align-items: center; justify-content: center; }
.ball svg { position: absolute; inset: 0; }
.ball span { font: 300 23px/30px "Open Sans", sans-serif; }
.ball small { font-size: 10px; }

/* site brand */
.brand { position: fixed; right: 11px; bottom: 8px; display: flex; align-items: center; }
.brand svg { width: 44px; height: 42px; margin-right: -2px; }
.brand div { display: flex; flex-direction: column; }
.brand strong { font-size: 21px; line-height: 24px; color: #5a9fdf; }
.brand em { font: 700 16px/18px "Liberation Sans", sans-serif; color: #62c08a; }
```
